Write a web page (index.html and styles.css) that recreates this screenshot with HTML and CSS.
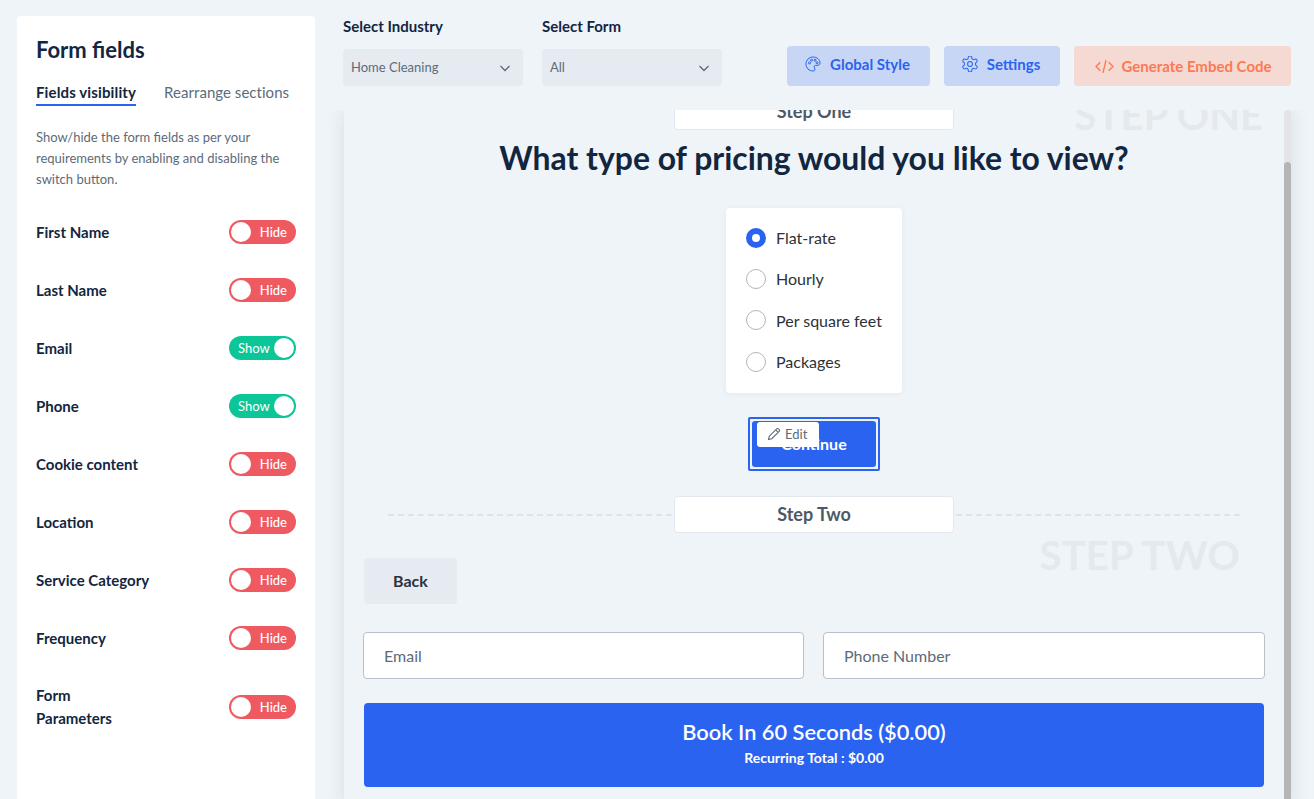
FILE: index.html
```html
<!DOCTYPE html>
<html lang="en">
<head>
  <meta charset="UTF-8">
  <title>Form builder</title>
  <link rel="stylesheet" href="styles.css">
</head>
<body>
  <aside class="sidebar">
    <h2>Form fields</h2>
    <div class="tabs">
      <span class="tab active">Fields visibility</span>
      <span class="tab">Rearrange sections</span>
    </div>
    <p class="hint">Show/hide the form fields as per your requirements by enabling and disabling the switch button.</p>

    <div class="field-row"><span>First Name</span><span class="toggle off"><i></i>Hide</span></div>
    <div class="field-row"><span>Last Name</span><span class="toggle off"><i></i>Hide</span></div>
    <div class="field-row"><span>Email</span><span class="toggle on">Show<i></i></span></div>
    <div class="field-row"><span>Phone</span><span class="toggle on">Show<i></i></span></div>
    <div class="field-row"><span>Cookie content</span><span class="toggle off"><i></i>Hide</span></div>
    <div class="field-row"><span>Location</span><span class="toggle off"><i></i>Hide</span></div>
    <div class="field-row"><span>Service Category</span><span class="toggle off"><i></i>Hide</span></div>
    <div class="field-row"><span>Frequency</span><span class="toggle off"><i></i>Hide</span></div>
    <div class="field-row tall"><span>Form<br>Parameters</span><span class="toggle off"><i></i>Hide</span></div>
  </aside>

  <main class="main">
    <div class="topbar">
      <div class="select-group">
        <label>Select Industry</label>
        <div class="select"><span>Home Cleaning</span>
          <svg viewBox="0 0 12 12" width="12" height="12"><path d="M1.500 4l4.500 4.500L10.500 4" /></svg>
        </div>
      </div>
      <div class="select-group">
        <label>Select Form</label>
        <div class="select"><span>All</span>
          <svg viewBox="0 0 12 12" width="12" height="12"><path d="M1.500 4l4.500 4.500L10.500 4" /></svg>
        </div>
      </div>
      <div class="actions">
        <button class="btn btn-blue btn-style">
          <svg viewBox="0 0 16 16" width="16" height="16">
            <path d="M8 1C4 1 1 4.100 1 8s3 7 7 7c1.300 0 2-.8 2-1.800 0-1.200-.9-1.500-.9-2.500 0-.8.7-1.300 1.500-1.300h1.600C14 9.400 15 8.400 15 7c0-3.400-3.100-6-7-6z" />
            <circle cx="4.500" cy="7" r="1" /><circle cx="6.500" cy="4.200" r="1" /><circle cx="10" cy="4.200" r="1" /><circle cx="12" cy="6.800" r="1" />
          </svg>
          Global Style
        </button>
        <button class="btn btn-blue btn-settings">
          <svg viewBox="2 2 20 20" width="16" height="16">
            <path d="M12.200 2h-.4a2 2 0 0 0-2 2v.2a2 2 0 0 1-1 1.700l-.4.300a2 2 0 0 1-2 0l-.2-.1a2 2 0 0 0-2.700.7l-.2.400a2 2 0 0 0 .7 2.700l.2.100a2 2 0 0 1 1 1.700v.5a2 2 0 0 1-1 1.700l-.2.100a2 2 0 0 0-.7 2.700l.2.400a2 2 0 0 0 2.700.7l.2-.1a2 2 0 0 1 2 0l.4.300a2 2 0 0 1 1 1.700v.2a2 2 0 0 0 2 2h.4a2 2 0 0 0 2-2v-.2a2 2 0 0 1 1-1.700l.4-.3a2 2 0 0 1 2 0l.2.100a2 2 0 0 0 2.700-.7l.2-.4a2 2 0 0 0-.7-2.700l-.2-.1a2 2 0 0 1-1-1.700v-.5a2 2 0 0 1 1-1.700l.2-.1a2 2 0 0 0 .7-2.700l-.2-.4a2 2 0 0 0-2.700-.7l-.2.100a2 2 0 0 1-2 0l-.4-.3a2 2 0 0 1-1-1.700V4a2 2 0 0 0-2-2z" />
            <circle cx="12" cy="12" r="3" />
          </svg>
          Settings
        </button>
        <button class="btn btn-orange">
          <svg viewBox="0 0 18 14" width="19" height="15"><path d="M5 3L1 7l4 4M13 3l4 4-4 4M10.500 1l-3 12" /></svg>
          Generate Embed Code
        </button>
      </div>
    </div>

    <div class="preview">
      <div class="preview-scroll">
        <section class="step step-one">
          <div class="step-badge">Step One</div>
          <div class="watermark">STEP ONE</div>
          <h1>What type of pricing would you like to view?</h1>
          <div class="radio-card">
            <div class="radio-row"><span class="radio checked"></span>Flat-rate</div>
            <div class="radio-row"><span class="radio"></span>Hourly</div>
            <div class="radio-row"><span class="radio"></span>Per square feet</div>
            <div class="radio-row"><span class="radio"></span>Packages</div>
          </div>
          <div class="continue-wrap">
            <button class="continue">Continue</button>
            <span class="edit-chip">
              <svg viewBox="0 0 14 14" width="14" height="14"><path d="M1.500 12.500l.8-3.300 7.400-7.400a1.200 1.200 0 0 1 1.700 0l.8.8a1.200 1.200 0 0 1 0 1.700l-7.400 7.400zM8.700 2.800l2.500 2.500" /></svg>
              Edit
            </span>
          </div>
        </section>

        <section class="step step-two">
          <div class="divider">
            <span class="dash"></span>
            <div class="step-badge">Step Two</div>
            <span class="dash"></span>
          </div>
          <div class="watermark">STEP TWO</div>
          <button class="back">Back</button>
          <div class="inputs">
            <div class="input">Email</div>
            <div class="input">Phone Number</div>
          </div>
          <button class="book">
            <span class="book-title">Book In 60 Seconds ($0.00)</span>
            <span class="book-sub">Recurring Total : $0.00</span>
          </button>
        </section>
      </div>
      <div class="scrollbar"><div class="thumb"></div></div>
    </div>
  </main>
</body>
</html>
```

FILE: styles.css
```css
:root {
  --primary: #2b63f1;
  --dark: #12263f;
  --muted: #5c6b7a;
  --page: #eff4f9;
  --border: #b9c0c7;
  --red: #ee5a5f;
  --green: #0cc698;
}

* {
  box-sizing: border-box;
}

html, body {
  height: 799px;
  overflow: hidden;
}

body {
  margin: 0;
  display: flex;
  padding: 16px 0 0 17px;
  background-color: var(--page);
  color: var(--dark);
  font-family: 'Lato', sans-serif;
}

button {
  font-family: inherit;
  border: none;
}

/* left panel */
.sidebar {
  width: 298px;
  height: 800px;
  flex-shrink: 0;
  padding: 20px 19px 0;
  background: white;
  border-radius: 4px;
}

.sidebar h2 {
  margin: 0;
  font-size: 22px;
  line-height: 28px;
  font-weight: 700;
}

.tabs {
  display: flex;
  gap: 28px;
  margin-top: 19px;
}

.tab {
  font-size: 15px;
  line-height: 18px;
  padding-bottom: 3px;
  color: var(--muted);
  letter-spacing: 0.04px;
  border-bottom: 2px solid transparent;
}

.tab.active {
  font-weight: 700;
  color: var(--dark);
  letter-spacing: 0.13px;
  border-bottom-color: var(--primary);
}

.hint {
  margin: 21px 0 0;
  font-size: 13px;
  line-height: 21px;
  color: var(--muted);
}

.hint + .field-row {
  margin-top: 13px;
}

.field-row {
  display: flex;
  align-items: center;
  justify-content: space-between;
  height: 58px;
  font-size: 15px;
  line-height: 23px;
  font-weight: 700;
}

.field-row.tall {
  height: 80px;
}

.toggle {
  display: flex;
  align-items: center;
  justify-content: space-between;
  width: 67px;
  height: 24px;
  padding: 0 2px;
  border-radius: 12px;
  color: white;
  font-size: 13px;
  font-weight: 400;
}

.toggle i {
  width: 20px;
  height: 20px;
  border-radius: 50%;
  background: white;
}

.toggle.off {
  background: var(--red);
  padding-right: 9px;
  font-weight: 500;
}

.toggle.on {
  background: var(--green);
  padding-left: 9px;
}

/* top bar */
.main {
  flex: 1;
  min-width: 0;
  margin-left: 28px;
  margin-top: -16px;
}

.topbar {
  display: flex;
  gap: 19px;
  height: 110px;
  padding-top: 17px;
}

.select-group label {
  display: block;
  font-size: 15px;
  line-height: 19px;
  font-weight: 700;
}

.select {
  display: flex;
  align-items: center;
  justify-content: space-between;
  width: 180px;
  height: 37px;
  margin-top: 13px;
  padding: 0 12px 0 8px;
  border-radius: 4px;
  background: #e6ebf2;
  color: var(--muted);
  font-size: 13px;
}

.select span {
  padding-bottom: 2px;
}

.select svg {
  fill: none;
  stroke: #5c6b7a;
  stroke-width: 1.300;
}

.actions {
  display: flex;
  gap: 14px;
  margin: 29px 0 0 46px;
  align-items: flex-start;
}

.btn {
  display: flex;
  align-items: center;
  justify-content: center;
  gap: 9px;
  height: 40px;
  border-radius: 4px;
  font-size: 15px;
  font-weight: 700;
  padding: 0 2px 4px 0;
}

.btn svg {
  fill: none;
  stroke: currentColor;
  stroke-width: 1;
}

.btn-blue {
  background: #c7d6f5;
  color: var(--primary);
}

.btn-style {
  width: 143px;
}

.btn-settings {
  width: 116px;
}

.btn-settings svg {
  stroke-width: 1.300;
}

.btn-orange {
  width: 217px;
  gap: 7px;
  padding: 0 0 0 2px;
  background: #f5d9d3;
  color: #fc7a52;
}

.btn-orange svg {
  stroke-width: 1.300;
}

/* preview */
.preview {
  position: relative;
  display: flex;
  width: 947px;
  height: 700px;
  margin-left: 1px;
  box-shadow: 0 0 18px rgba(18, 38, 63, 0.1);
  clip-path: inset(0 -20px -20px -20px);
}

.preview-scroll {
  width: 940px;
  background: var(--page);
  padding: 0 20px;
  overflow: hidden;
}

.scrollbar {
  width: 7px;
  padding-top: 52px;
  background: #e2e4e7;
  border-radius: 4px 4px 0 0;
}

.thumb {
  height: 100%;
  background: #b4b5b7;
  border-radius: 4px 4px 0 0;
}

.step {
  position: relative;
}

.step-one {
  margin-top: -17px;
  text-align: center;
}

.step-badge {
  width: 280px;
  height: 37px;
  margin: 0 auto;
  background: white;
  border: 1px solid #e3e8ee;
  border-radius: 4px;
  color: #4c5a68;
  font-size: 18px;
  line-height: 35px;
  font-weight: 700;
  text-align: center;
}

.watermark {
  position: absolute;
  color: #e4e9ee;
  font-size: 40px;
  line-height: 40px;
  font-weight: 700;
}

.step-one .watermark {
  right: 1px;
  top: 2px;
}

.step-two .watermark {
  right: 24px;
  top: 39px;
  letter-spacing: 0.2px;
}

h1 {
  margin: 8px 0 0;
  font-size: 31.900px;
  line-height: 40px;
  font-weight: 700;
}

.radio-card {
  width: 176px;
  height: 185px;
  margin: 30px auto 0;
  padding: 9px 0 0 20px;
  background: white;
  border-radius: 4px;
  box-shadow: 0 1px 6px rgba(18, 38, 63, 0.06);
  text-align: left;
}

.radio-row {
  display: flex;
  align-items: center;
  gap: 10px;
  height: 41.300px;
  font-size: 16px;
  color: #2c3238;
}

.radio {
  width: 20px;
  height: 20px;
  border-radius: 50%;
  border: 1px solid #aeb7c0;
}

.radio.checked {
  border: 6.500px solid var(--primary);
}

.continue-wrap {
  position: relative;
  width: 132px;
  height: 54px;
  margin: 24px auto 0;
  padding: 2px;
  border: 2px solid var(--primary);
  border-radius: 2px;
}

.continue {
  display: block;
  width: 100%;
  height: 100%;
  padding: 0 0 2px;
  background: var(--primary);
  border-radius: 3px;
  color: white;
  font-size: 16px;
  font-weight: 700;
}

.edit-chip {
  position: absolute;
  left: 7px;
  top: 3px;
  display: flex;
  align-items: center;
  gap: 4px;
  width: 62px;
  height: 25px;
  padding: 0 0 1px 10px;
  background: white;
  border-radius: 3px;
  color: var(--muted);
  font-size: 13px;
}

.edit-chip svg {
  fill: none;
  stroke: #5c6b7a;
  stroke-width: 1.100;
}

.step-two {
  margin-top: 25px;
}

.divider {
  display: flex;
  align-items: center;
  gap: 2px;
  padding: 0 24px;
}

.dash {
  flex: 1;
  border-top: 2px dashed #dfe3e8;
}

.back {
  display: block;
  width: 93px;
  height: 46px;
  margin: 25px 0 0 0;
  padding: 0 0 2px;
  background: #e6ebf2;
  border-radius: 4px;
  color: #2c3238;
  font-size: 16px;
  font-weight: 700;
}

.inputs {
  display: grid;
  grid-template-columns: 441px 442px;
  gap: 19px;
  margin: 28px -1px 0;
}

.input {
  height: 47px;
  padding: 0 20px;
  background: white;
  border: 1px solid var(--border);
  border-radius: 4px;
  color: var(--muted);
  font-size: 16px;
  line-height: 45px;
}

.book {
  display: flex;
  flex-direction: column;
  align-items: center;
  width: 100%;
  height: 84px;
  margin-top: 24px;
  padding: 15px 0 0;
  background: var(--primary);
  border-radius: 4px;
  color: white;
}

.book-title {
  font-size: 21.800px;
  line-height: 28px;
  font-weight: 600;
}

.book-sub {
  margin-top: 3px;
  font-size: 14px;
  line-height: 17px;
  font-weight: 700;
}
```
